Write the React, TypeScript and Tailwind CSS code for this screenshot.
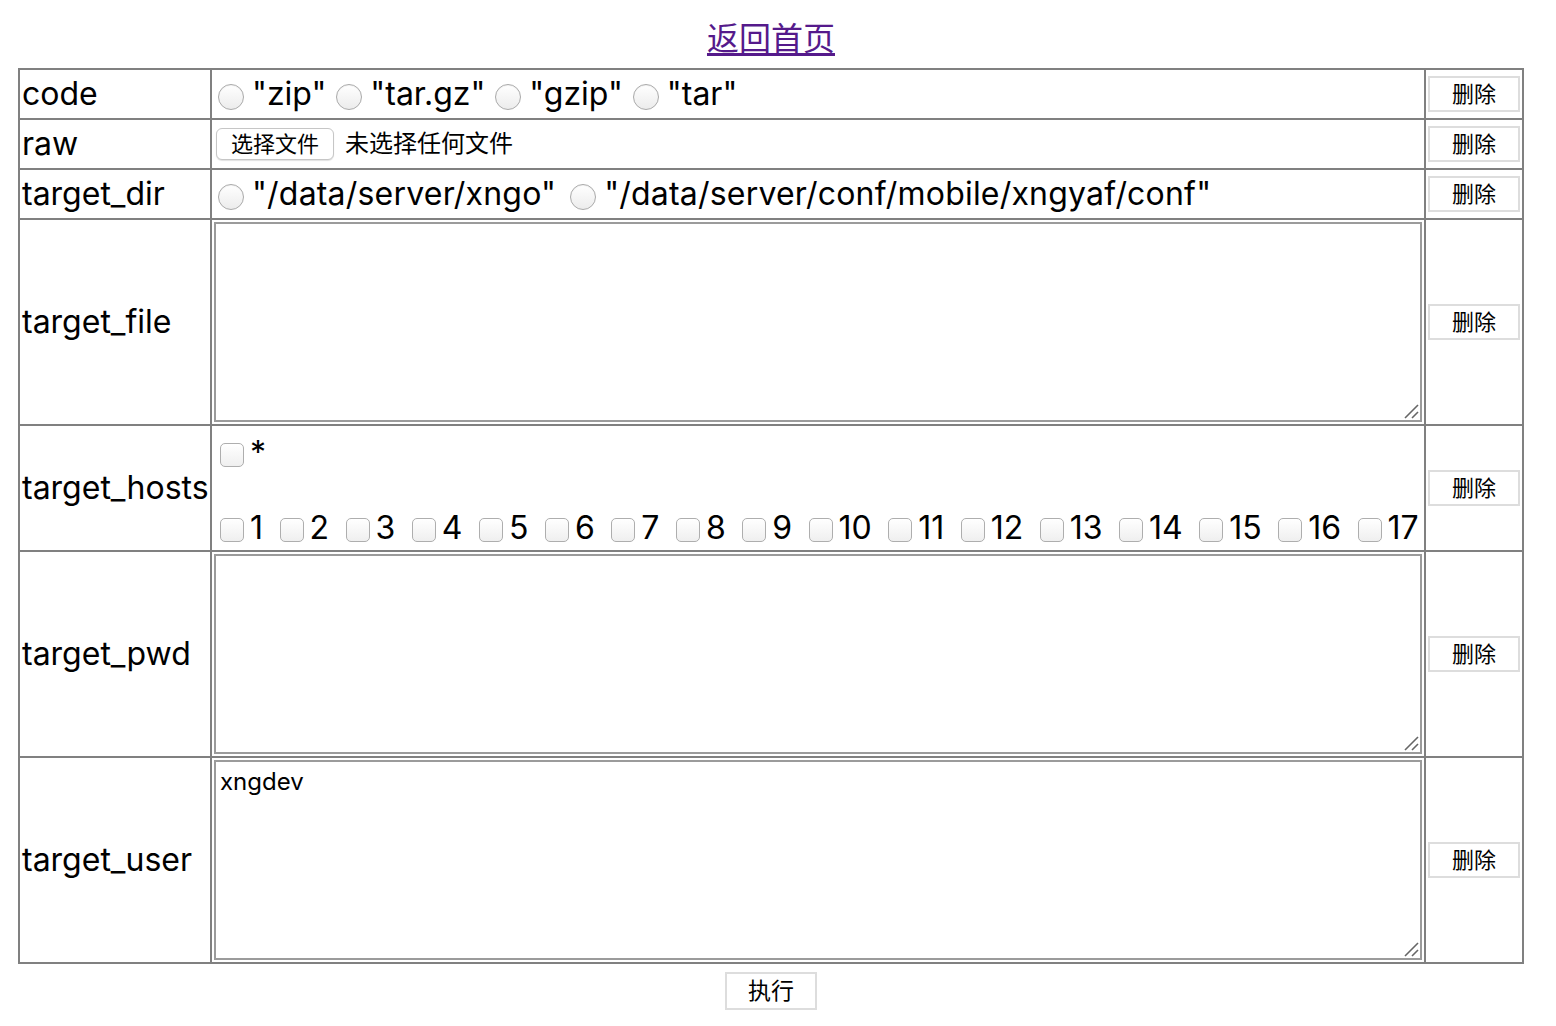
import React from 'react';

const sans = "font-['Inter','Noto_Sans_CJK_SC',sans-serif]";

function Radio() {
  return (
    <span className="mt-[5px] ml-[4px] mr-[8px] inline-block h-[26px] w-[26px] shrink-0 rounded-full border border-[#aaaaaa] bg-gradient-to-b from-white to-[#ececec] shadow-[inset_0_1px_1px_rgba(0,0,0,0.05)]" />
  );
}

function Checkbox() {
  return (
    <span className="mt-[3px] ml-[6px] mr-[6px] inline-block h-[24px] w-[24px] shrink-0 rounded-[5px] border border-[#aeaeae] bg-gradient-to-b from-white to-[#efefef]" />
  );
}

function DeleteButton() {
  return (
    <div className="flex items-center bg-white px-[2px]">
      <button className="h-[36px] w-[92px] border-2 border-[#dddddd] bg-white text-[22px] leading-none text-black">
        删除
      </button>
    </div>
  );
}

function Label({ text }: { text: string }) {
  return (
    <div className="flex items-center bg-white pl-[2px] text-[32px] text-black">{text}</div>
  );
}

// textarea with the drawn resize grip in its corner
function Area({ value }: { value?: string }) {
  return (
    <div className="bg-white p-[2px]">
      <div className="relative">
        <textarea
          defaultValue={value}
          className={`block h-[200px] w-[1208px] resize-none border-2 border-[#9b9b9b] px-[4px] pt-[5px] text-[24px] leading-[30px] text-black outline-none ${sans}`}
        />
        <svg className="absolute right-[3px] bottom-[3px]" width="16" height="16" viewBox="0 0 16 16">
          <path d="M15 2 L2 15" stroke="#666" strokeWidth="1.6" />
          <path d="M15 9 L9 15" stroke="#666" strokeWidth="1.6" />
        </svg>
      </div>
    </div>
  );
}

const hosts = Array.from({ length: 17 }, (_, i) => String(i + 1));

export default function App() {
  return (
    <div className={`min-h-screen bg-white ${sans}`}>
      <div className="ml-[18px] w-[1506px]">
        <div className="flex h-[68px] items-start justify-center pt-[20px]">
          <a href="#" className="text-[32px] leading-[37px] text-[#551a8b] underline underline-offset-[3px]">
            返回首页
          </a>
        </div>

        <div className="grid grid-cols-[190px_1212px_96px] grid-rows-[48px_48px_48px_204px_124px_204px_204px] gap-[2px] bg-[#808080] p-[2px]">
          {/* code */}
          <Label text="code" />
          <div className="flex items-center bg-white pl-[2px] text-[32px]">
            {['"zip"', '"tar.gz"', '"gzip"', '"tar"'].map((t) => (
              <span key={t} className="mr-[6px] flex items-center">
                <Radio />
                {t}
              </span>
            ))}
          </div>
          <DeleteButton />

          {/* raw */}
          <Label text="raw" />
          <div className="flex items-center bg-white pl-[4px]">
            <span className="flex h-[32px] w-[118px] items-center justify-center rounded-[6px] border border-[#c6c6c6] bg-white text-[22px] shadow-[0_1px_1px_rgba(0,0,0,0.12)]">
              选择文件
            </span>
            <span className="ml-[11px] text-[24px]">未选择任何文件</span>
          </div>
          <DeleteButton />

          {/* target_dir */}
          <Label text="target_dir" />
          <div className="flex items-center bg-white pl-[2px] text-[32px]">
            {['"/data/server/xngo"', '"/data/server/conf/mobile/xngyaf/conf"'].map((t) => (
              <span key={t} className="mr-[10px] flex items-center tracking-[0.2px]">
                <Radio />
                {t}
              </span>
            ))}
          </div>
          <DeleteButton />

          {/* target_file */}
          <Label text="target_file" />
          <Area />
          <DeleteButton />

          {/* target_hosts */}
          <Label text="target_hosts" />
          <div className="flex flex-col justify-between bg-white pt-[9px] pb-[4px] pl-[2px] text-[32px] leading-[36px]">
            <div className="flex h-[36px] items-center">
              <Checkbox />*
            </div>
            <div className="flex h-[36px] items-center">
              {hosts.map((h) => (
                <span key={h} className="mr-[10.5px] flex items-center">
                  <Checkbox />
                  {h}
                </span>
              ))}
            </div>
          </div>
          <DeleteButton />

          {/* target_pwd */}
          <Label text="target_pwd" />
          <Area />
          <DeleteButton />

          {/* target_user */}
          <Label text="target_user" />
          <Area value="xngdev" />
          <DeleteButton />
        </div>

        <div className="flex justify-center pt-[8px]">
          <button className="h-[38px] w-[92px] border-2 border-[#dddddd] bg-white text-[23px] leading-none text-black">
            执行
          </button>
        </div>
      </div>
    </div>
  );
}
